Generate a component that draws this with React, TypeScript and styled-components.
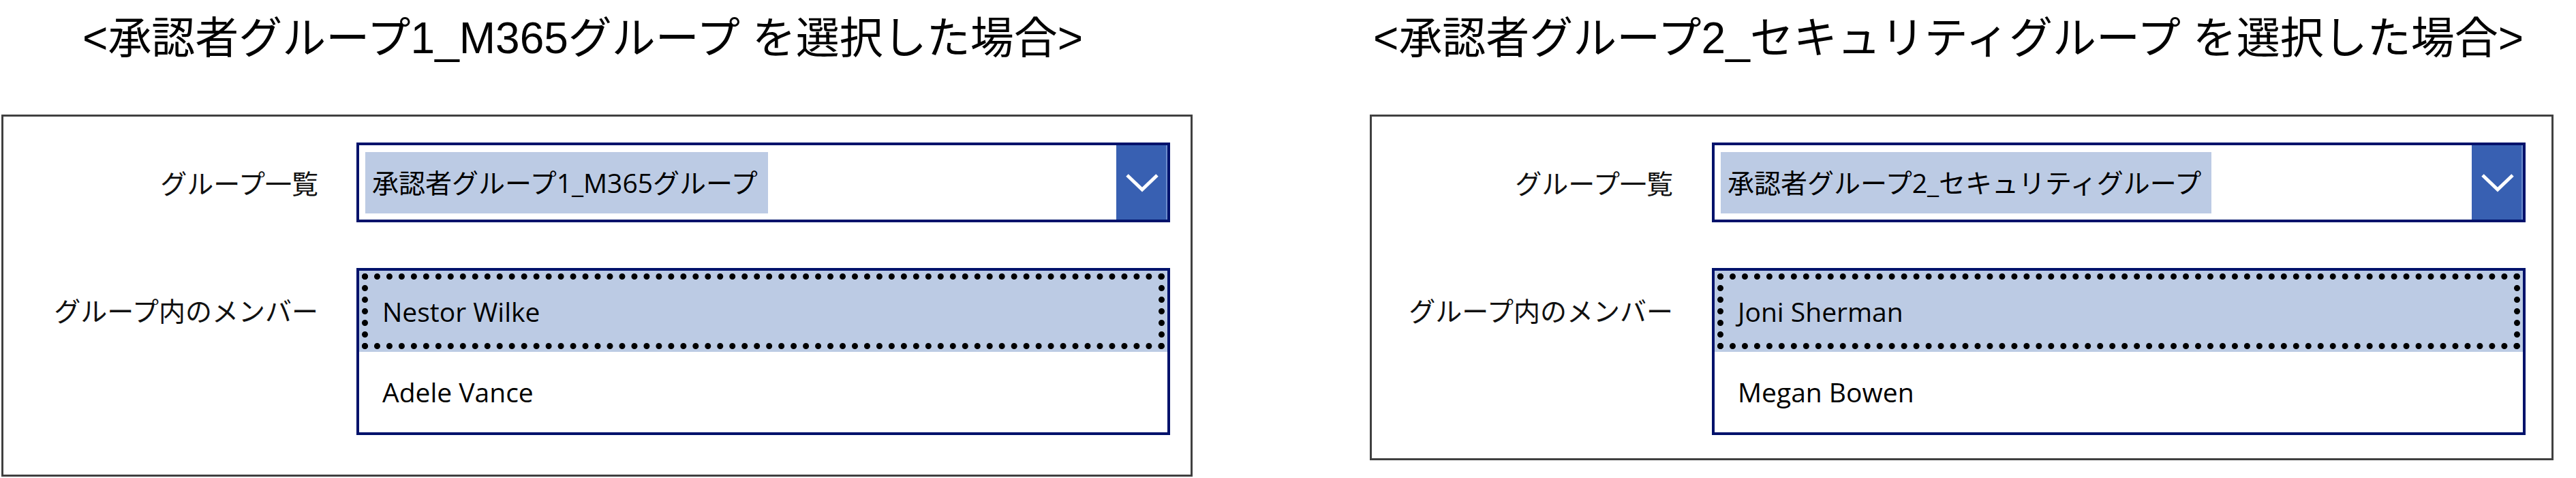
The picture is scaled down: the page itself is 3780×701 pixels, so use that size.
import * as React from 'react';
import styled, { createGlobalStyle, css } from 'styled-components';

const NAVY = '#00126b';
const SELECTION = '#bccbe4';
const UI_FONT = `"Open Sans", "Noto Sans CJK JP", sans-serif`;

const GlobalStyle = createGlobalStyle`
  html, body {
    margin: 0;
    padding: 0;
    background: #ffffff;
  }
  body {
    width: 3780px;
    height: 701px;
    overflow: hidden;
    font-family: "Noto Sans CJK JP", sans-serif;
  }
`;

const Page = styled.div`
  display: flex;
  align-items: flex-start;
  gap: 260px;
  padding-left: 2px;
  height: 701px;
  box-sizing: border-box;
`;

const Column = styled.section<{ $width: number }>`
  display: flex;
  flex-direction: column;
  flex: none;
  width: ${(p) => p.$width}px;
`;

const Caption = styled.h2<{ $indent: number }>`
  margin: 24px 0 80px ${(p) => p.$indent}px;
  font: 400 64px/64px "Liberation Sans", "Noto Sans CJK JP", sans-serif;
  color: #000;
  white-space: nowrap;
`;

const Frame = styled.div<{ $height: number; $labelWidth: number; $gap: number }>`
  box-sizing: border-box;
  height: ${(p) => p.$height}px;
  border: 3px solid #404040;
  padding-top: 38px;
  display: grid;
  grid-template-columns: ${(p) => p.$labelWidth}px 1194px;
  align-content: start;
  align-items: start;
  column-gap: ${(p) => p.$gap}px;
  row-gap: 67px;
`;

const FieldLabel = styled.div<{ $height: number }>`
  height: ${(p) => p.$height}px;
  display: flex;
  align-items: center;
  justify-content: flex-end;
  font: 400 39px/1 "Noto Sans CJK JP", sans-serif;
  color: #111;
  white-space: nowrap;
`;

const Select = styled.div`
  box-sizing: border-box;
  height: 117px;
  border: 4px solid ${NAVY};
  display: flex;
  background: #fff;
`;

const SelectValue = styled.div`
  flex: 1;
  min-width: 0;
  display: flex;
  align-items: center;
  padding: 0 9px;
`;

const ValueChip = styled.span`
  height: 90px;
  display: inline-flex;
  align-items: center;
  padding: 0 15px 0 10px;
  background: ${SELECTION};
  font: 400 39px/1 ${UI_FONT};
  color: #000;
  white-space: nowrap;
`;

const SelectButton = styled.div`
  flex: none;
  width: 75px;
  display: flex;
  align-items: center;
  justify-content: center;
  background: #3860b2;
  box-shadow: inset -2px 0 0 #6d8bcc;
`;

const ListBox = styled.div`
  box-sizing: border-box;
  height: 245px;
  border: 4px solid ${NAVY};
  display: flex;
  flex-direction: column;
  background: #fff;
`;

const ListRow = styled.div<{ $selected?: boolean }>`
  position: relative;
  flex: 1;
  display: flex;
  align-items: center;
  padding-left: 34px;
  background: ${(p) => (p.$selected ? SELECTION : '#fff')};
  font: 400 39px/1 ${UI_FONT};
  color: #000;

  ${(p) =>
    p.$selected &&
    css`
      &::after {
        content: '';
        position: absolute;
        inset: 4px;
        border: 9px dotted #000;
        pointer-events: none;
      }
    `}
`;

const Chevron = () => (
  <svg width="50" height="28" viewBox="0 0 50 28" aria-hidden="true">
    <path d="M3 3 L25 24 L47 3" fill="none" stroke="#fff" strokeWidth="5" />
  </svg>
);

interface IGroupCase {
  id: string;
  group: string;
  members: string[];
  width: number;
  height: number;
  labelWidth: number;
  gap: number;
  indent: number;
}

const cases: IGroupCase[] = [
  {
    id: 'm365',
    group: '承認者グループ1_M365グループ',
    members: ['Nestor Wilke', 'Adele Vance'],
    width: 1748,
    height: 531,
    labelWidth: 462,
    gap: 56,
    indent: 119,
  },
  {
    id: 'security',
    group: '承認者グループ2_セキュリティグループ',
    members: ['Joni Sherman', 'Megan Bowen'],
    width: 1737,
    height: 507,
    labelWidth: 442,
    gap: 57,
    indent: 5,
  },
];

const GroupPanel = ({ data }: { data: IGroupCase }) => (
  <Column $width={data.width}>
    <Caption $indent={data.indent}>&lt;{data.group} を選択した場合&gt;</Caption>
    <Frame $height={data.height} $labelWidth={data.labelWidth} $gap={data.gap}>
      <FieldLabel $height={117}>グループ一覧</FieldLabel>
      <Select role="combobox" aria-label="グループ一覧">
        <SelectValue>
          <ValueChip>{data.group}</ValueChip>
        </SelectValue>
        <SelectButton>
          <Chevron />
        </SelectButton>
      </Select>

      <FieldLabel $height={122}>グループ内のメンバー</FieldLabel>
      <ListBox role="listbox" aria-label="グループ内のメンバー">
        {data.members.map((name, i) => (
          <ListRow key={name} $selected={i === 0} role="option" aria-selected={i === 0}>
            {name}
          </ListRow>
        ))}
      </ListBox>
    </Frame>
  </Column>
);

const App = () => (
  <>
    <GlobalStyle />
    <Page>
      {cases.map((c) => (
        <GroupPanel key={c.id} data={c} />
      ))}
    </Page>
  </>
);

export default App;
